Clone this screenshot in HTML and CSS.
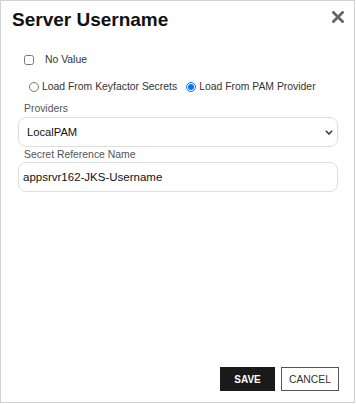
FILE: index.html
```html
<!DOCTYPE html>
<html lang="en">
<head>
    <meta charset="UTF-8">
    <title>Server Username</title>
    <link rel="stylesheet" href="styles.css">
</head>
<body>
    <div class="dialog">
        <div class="dialog-header">
            <h2>Server Username</h2>
            <svg class="close" width="12" height="12" viewBox="0 0 12 12">
                <path d="M1.5 1.5 L10.5 10.5 M10.5 1.5 L1.5 10.5" stroke="#666" stroke-width="2.8" stroke-linecap="square"/>
            </svg>
        </div>
        <div class="dialog-body">
            <label class="check-row">
                <input type="checkbox">
                <span>No Value</span>
            </label>
            <div class="radio-row">
                <label class="radio-first"><input type="radio" name="source">Load From Keyfactor Secrets</label>
                <label><input type="radio" name="source" checked>Load From PAM Provider</label>
            </div>
            <div class="field-label">Providers</div>
            <div class="select-box">
                <span>LocalPAM</span>
                <svg width="8" height="5" viewBox="0 0 8 5"><path d="M0.8 0.8 L4 4 L7.2 0.8" fill="none" stroke="#333" stroke-width="1.5"/></svg>
            </div>
            <div class="field-label">Secret Reference Name</div>
            <div class="text-box">appsrvr162-JKS-Username</div>
        </div>
        <div class="dialog-footer">
            <button class="btn save">SAVE</button>
            <button class="btn cancel">CANCEL</button>
        </div>
    </div>
</body>
</html>
```

FILE: styles.css
```css
body {
    margin: 0;
    font-family: 'Liberation Sans', Arial, sans-serif;
    background: #fff;
}

.dialog {
    width: 355px;
    height: 403px;
    box-sizing: border-box;
    border: 1px solid #d2d2d2;
    display: flex;
    flex-direction: column;
}

.dialog-header {
    display: flex;
    justify-content: space-between;
    align-items: flex-start;
    padding: 8px 10px 0 11px;
}

.dialog-header h2 {
    margin: 0;
    font-size: 19px;
    line-height: 22px;
    font-weight: 700;
    color: #111;
}

.close {
    margin-top: 2px;
}

.dialog-body {
    flex: 1;
    padding: 0 16px 0 17px;
    font-size: 10.4px;
    line-height: 14px;
}

.check-row {
    display: flex;
    align-items: center;
    margin-top: 22px;
    color: #333;
}

.check-row input {
    width: 10px;
    height: 10px;
    margin: 0 11px 0 6px;
}

.radio-row {
    display: flex;
    margin-top: 13px;
    padding-left: 10px;
    color: #333;
}

.radio-row label {
    display: flex;
    align-items: center;
}

.radio-row input {
    width: 10px;
    height: 10px;
    margin: 0 3px 0 1px;
}

.radio-first {
    margin-right: 8px;
}

.field-label {
    color: #555;
    padding-left: 6px;
    margin-top: 8px;
    margin-bottom: 1px;
}

.select-box + .field-label {
    margin-top: 1px;
    margin-bottom: 0;
}

.select-box,
.text-box {
    height: 30px;
    box-sizing: border-box;
    border: 1px solid #dedede;
    border-radius: 8px;
    display: flex;
    align-items: center;
    color: #111;
}

.select-box {
    justify-content: space-between;
    padding: 0 4px 0 8px;
    font-size: 11.2px;
}

.text-box {
    padding: 0 4px;
    font-size: 11.5px;
}

.dialog-footer {
    display: flex;
    justify-content: flex-end;
    gap: 6px;
    padding: 0 15px 11px 0;
}

.btn {
    height: 24px;
    padding: 0;
    font-family: 'Liberation Sans', Arial, sans-serif;
}

.save {
    width: 55px;
    background: #1a1a1a;
    color: #fff;
    font-size: 10px;
    font-weight: 700;
    border: none;
}

.cancel {
    width: 58px;
    background: #fff;
    color: #333;
    font-size: 10.4px;
    border: 1px solid #555;
}
```
